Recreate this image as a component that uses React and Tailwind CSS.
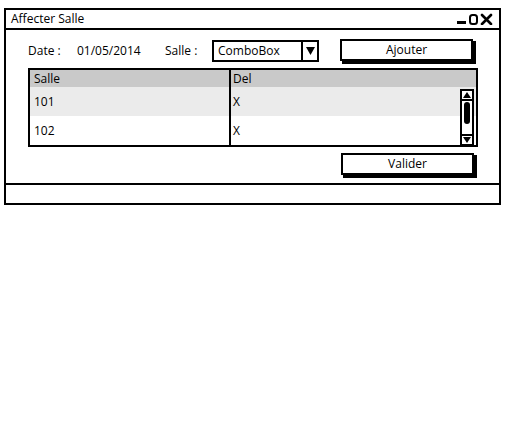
import React from "react";

const font = { fontFamily: '"Open Sans", "Liberation Sans", sans-serif' };

function WindowControls() {
  return (
    <svg width="40" height="12" viewBox="0 0 40 12" className="mr-[3px]">
      <rect x="1" y="8" width="9" height="3" fill="#000" />
      <rect x="14" y="2" width="7" height="9" rx="2.5" fill="none" stroke="#000" strokeWidth="2" />
      <path d="M26 2 L35 11 M35 2 L26 11" stroke="#000" strokeWidth="2.6" strokeLinecap="round" />
    </svg>
  );
}

function Scrollbar() {
  return (
    <div className="absolute right-[2px] top-[19px] flex h-[57px] w-[14px] flex-col border-2 border-black bg-white">
      <div className="flex h-[10px] items-center justify-center border-b-2 border-black">
        <svg width="8" height="6" viewBox="0 0 8 6">
          <path d="M0 6 L4 0 L8 6 Z" fill="#000" />
        </svg>
      </div>
      <div className="flex flex-1 items-start justify-center pt-[1px]">
        <div className="h-[22px] w-[6px] rounded-[3px] bg-black" />
      </div>
      <div className="flex h-[10px] items-center justify-center border-t-2 border-black">
        <svg width="8" height="6" viewBox="0 0 8 6">
          <path d="M0 0 L8 0 L4 6 Z" fill="#000" />
        </svg>
      </div>
    </div>
  );
}

function SketchButton({ label, className }) {
  return (
    <div className={"relative h-[24px] w-[135px] " + className}>
      <div className="absolute left-[2px] top-[2px] h-[23px] w-[134px] bg-black" />
      <div className="relative flex h-[22px] w-[133px] items-center justify-center border-2 border-black bg-white text-[12px] text-black">
        {label}
      </div>
    </div>
  );
}

export default function App() {
  return (
    <div className="h-[434px] w-[509px] bg-white text-black" style={font}>
      <div className="ml-[4px] pt-[8px]">
        <div className="flex w-[497px] flex-col border-2 border-black">
          <div className="flex h-[20px] items-center justify-between border-b-2 border-black pl-[5px]">
            <span className="text-[12px] leading-none">Affecter Salle</span>
            <WindowControls />
          </div>

          <div className="flex h-[153px] flex-col">
            <div className="mt-[9px] flex h-[23px] items-center pl-[22px] text-[12px]">
              <span className="w-[49px]">Date :</span>
              <span className="w-[88px]">01/05/2014</span>
              <span className="w-[47px]">Salle :</span>
              <div className="flex h-[22px] w-[107px] items-stretch border-2 border-black">
                <span className="flex flex-1 items-center pl-[4px]">ComboBox</span>
                <div className="flex w-[16px] items-center justify-center border-l-2 border-black">
                  <svg width="9" height="8" viewBox="0 0 9 8">
                    <path d="M0 0 L9 0 L4.5 8 Z" fill="#000" />
                  </svg>
                </div>
              </div>
              <SketchButton label="Ajouter" className="ml-[21px]" />
            </div>

            <div className="relative ml-[22px] mt-[6px] h-[79px] w-[450px] border-2 border-black text-[12px]">
              <div className="flex h-[17px] bg-[#c9c9c9]">
                <div className="flex w-[201px] items-center border-r-2 border-black pl-[4px]">Salle</div>
                <div className="flex flex-1 items-center pl-[2px]">Del</div>
              </div>
              <div className="flex h-[29px] bg-[#ebebeb]">
                <div className="flex w-[201px] items-center border-r-2 border-black pl-[4px]">101</div>
                <div className="flex flex-1 items-center pl-[2px]">X</div>
              </div>
              <div className="flex h-[29px] bg-white">
                <div className="flex w-[201px] items-center border-r-2 border-black pl-[4px]">102</div>
                <div className="flex flex-1 items-center pl-[2px]">X</div>
              </div>
              <Scrollbar />
            </div>

            <div className="mt-[6px] flex justify-end pr-[23px]">
              <SketchButton label="Valider" />
            </div>
          </div>

          <div className="h-[20px] border-t-2 border-black" />
        </div>
      </div>
    </div>
  );
}
